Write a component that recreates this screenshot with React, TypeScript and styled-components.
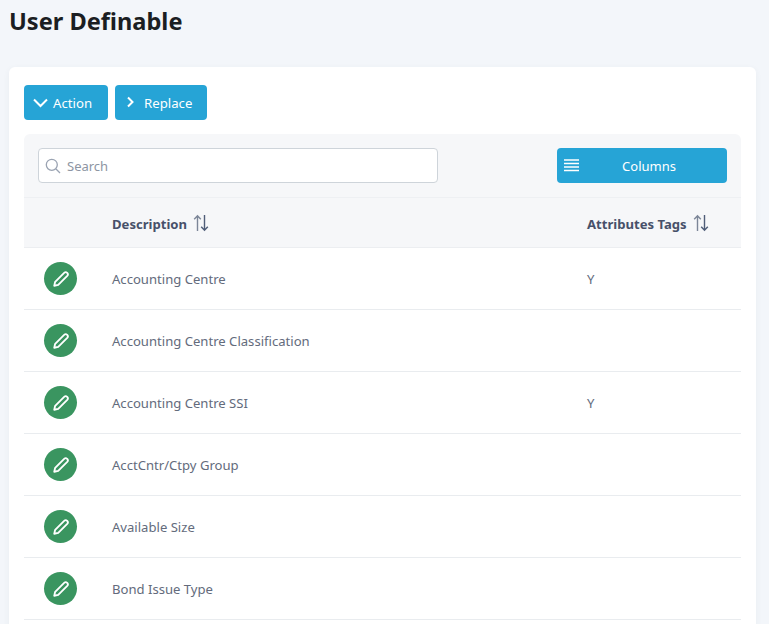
import React from "react";
import styled, { createGlobalStyle } from "styled-components";

const Global = createGlobalStyle`
  html, body { margin: 0; padding: 0; height: 624px; overflow: hidden; background: #f3f6fa; }
  body { font-family: "Noto Sans", "Open Sans", sans-serif; color: #495057; }
  * { box-sizing: border-box; }
`;
const Page = styled.div`
  padding: 0 13px 0 9px;
  height: 624px;
  overflow: hidden;
`;
const Title = styled.h1`
  margin: 0;
  height: 67px;
  padding-top: 3px;
  font-size: 23.6px;
  line-height: 36px;
  font-weight: 700;
  color: #1b1e22;
`;
const Card = styled.section`
  background: #fff;
  border-radius: 6px 6px 0 0;
  padding: 18px 15px 30px;
  box-shadow: 0 2px 6px rgba(60, 80, 110, 0.06);
`;
const ActionBar = styled.div`
  display: flex;
  gap: 7px;
  margin-bottom: 14px;
`;
const Button = styled.button<{ $w: number; $gap: number }>`
  width: ${(p) => p.$w}px;
  height: 35px;
  display: flex;
  align-items: center;
  gap: ${(p) => p.$gap}px;
  padding: 0 0 0 9px;
  border: 0;
  border-radius: 4px;
  background: #26a4d6;
  color: #fff;
  font: 400 13.2px "Noto Sans", sans-serif;
`;
const Toolbar = styled.div`
  height: 64px;
  padding: 14px 14px 0;
  background: #f6f7f9;
  border-radius: 6px 6px 0 0;
  border-bottom: 1px solid #eef0f3;
  display: flex;
  justify-content: space-between;
`;
const SearchBox = styled.label`
  width: 400px;
  height: 35px;
  display: flex;
  align-items: center;
  gap: 6px;
  padding-left: 6px;
  background: #fff;
  border: 1px solid #ced4da;
  border-radius: 4px;
`;
const SearchInput = styled.input`
  flex: 1;
  min-width: 0;
  padding: 0;
  border: 0;
  outline: 0;
  background: transparent;
  font: 400 13px "Noto Sans", sans-serif;
  &::placeholder { color: #8d95a3; opacity: 1; }
`;
const ColumnsButton = styled.button`
  width: 170px;
  height: 35px;
  position: relative;
  display: flex;
  align-items: center;
  justify-content: center;
  padding: 0 0 0 14px;
  border: 0;
  border-radius: 4px;
  background: #26a4d6;
  color: #fff;
  font: 400 13px "Noto Sans", sans-serif;
`;
const ColumnsIcon = styled.svg`
  position: absolute;
  left: 7px;
  top: 10px;
`;
const Table = styled.div`
  display: grid;
  grid-template-columns: 88px 475px 154px;
`;
const Head = styled.div`
  height: 50px;
  padding-top: 2px;
  display: flex;
  align-items: center;
  gap: 6px;
  background: #f6f7f9;
  border-bottom: 1px solid #eceef1;
  font-size: 13.1px;
  font-weight: 700;
  color: #475069;
`;
const Cell = styled.div`
  height: 62px;
  display: flex;
  align-items: center;
  border-bottom: 1px solid #e9ecef;
  font-size: 13.1px;
  color: #636b7c;
`;
const EditButton = styled.button`
  width: 33px;
  height: 33px;
  margin-left: 20px;
  padding: 0;
  display: flex;
  align-items: center;
  justify-content: center;
  border: 0;
  border-radius: 50%;
  background: #3a9560;
`;
const SortIcon = styled.svg`
  margin-top: -2px;
`;

const Sort = () => (
  <SortIcon width="16" height="18" viewBox="0 0 16 18" fill="none" strokeWidth="1.4">
    <path d="M4.5 17V2M1.2 5.3L4.5 1.8l3.3 3.5" stroke="#7c8698" />
    <path d="M11.5 1v15M8.2 12.7l3.3 3.5 3.3-3.5" stroke="#4f5d78" />
  </SortIcon>
);
const Pencil = () => (
  <svg width="18" height="18" viewBox="0 0 24 24" fill="none" stroke="#fff" strokeWidth="2.4" strokeLinecap="round" strokeLinejoin="round">
    <path d="M3 21l1.2-5.3L16.2 3.8a3 3 0 0 1 4.1 0 3 3 0 0 1 0 4.1L8.3 19.8z" />
  </svg>
);
const rows = [
  ["Accounting Centre", "Y"],
  ["Accounting Centre Classification", ""],
  ["Accounting Centre SSI", "Y"],
  ["AcctCntr/Ctpy Group", ""],
  ["Available Size", ""],
  ["Bond Issue Type", ""],
];

export default function App() {
  return (
    <Page>
      <Global />
      <Title>User Definable</Title>
      <Card>
        <ActionBar>
          <Button $w={84} $gap={5}>
            <svg width="15" height="14" viewBox="0 0 15 14" fill="none" stroke="#fff" strokeWidth="2"><path d="M1 3.5L7.5 10 14 3.5" /></svg>
            Action
          </Button>
          <Button $w={92} $gap={9}>
            <svg width="9" height="14" viewBox="0 0 9 14" fill="none" stroke="#fff" strokeWidth="2" style={{ marginLeft: 2 }}><path d="M2 1.5l4.5 4.5L2 10.5" /></svg>
            Replace
          </Button>
        </ActionBar>
        <Toolbar>
          <SearchBox>
            <svg width="16" height="16" viewBox="0 0 16 16" fill="none" stroke="#9aa3b2" strokeWidth="1.3"><circle cx="6.8" cy="6.8" r="5.5" /><path d="M11 11l4 4" /></svg>
            <SearchInput placeholder="Search" />
          </SearchBox>
          <ColumnsButton>
            <ColumnsIcon width="16" height="15" viewBox="0 0 16 15" stroke="#fff" strokeWidth="1.4"><path d="M0 2h15M0 5.5h15M0 9h15M0 12.5h15" /></ColumnsIcon>
            Columns
          </ColumnsButton>
        </Toolbar>
        <Table>
          <Head />
          <Head>Description <Sort /></Head>
          <Head>Attributes Tags <Sort /></Head>
          {rows.map(([d, a]) => (
            <React.Fragment key={d}>
              <Cell><EditButton aria-label="Edit"><Pencil /></EditButton></Cell>
              <Cell>{d}</Cell>
              <Cell>{a}</Cell>
            </React.Fragment>
          ))}
        </Table>
      </Card>
    </Page>
  );
}
